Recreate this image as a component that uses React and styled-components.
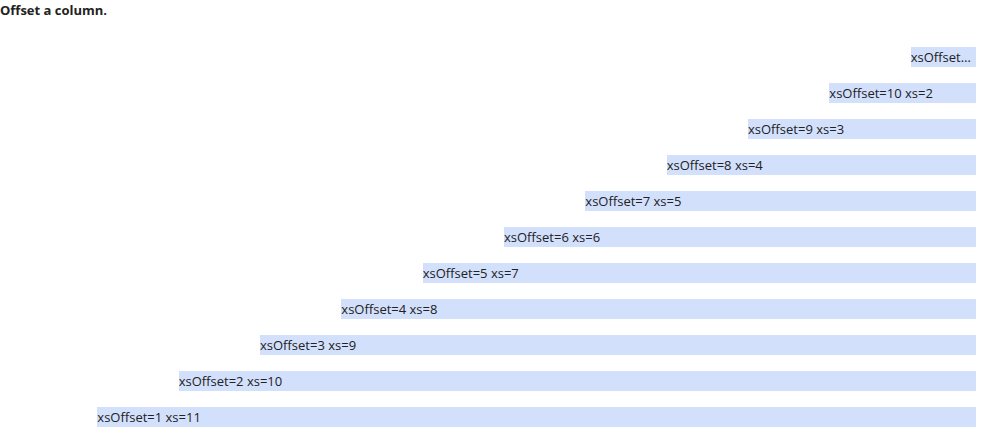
import React from 'react';
import styled, { createGlobalStyle } from 'styled-components';

const GlobalStyle = createGlobalStyle`
    body {
        margin: 0;
        font-family: "Open Sans", "Noto Sans", sans-serif;
        color: #222;
        background: #fff;
    }
`;

const Title = styled.h4`
    margin: 0;
    font-size: 13px;
    font-weight: 700;
    line-height: 20px;
`;

// 12칸 그리드, 왼쪽에 16px 여백
const Grid = styled.div`
    display: grid;
    grid-template-columns: repeat(12, 1fr);
    row-gap: 16px;
    margin: 27px 0 0 16px;
`;

const Cell = styled.div`
    grid-column: ${props => props.offset + 1} / span ${props => props.span};
    padding-right: 16px;
    min-width: 0;
`;

const Bar = styled.div`
    height: 20px;
    line-height: 20px;
    font-size: 13px;
    background-color: #d3e0fc;
    white-space: nowrap;
    overflow: hidden;
    text-overflow: ellipsis;
`;

const rows = [11, 10, 9, 8, 7, 6, 5, 4, 3, 2, 1];

const App = () => (
    <>
        <GlobalStyle/>
        <Title>Offset a column.</Title>
        <Grid>
            {rows.map(offset => (
                <Cell key={offset} offset={offset} span={12 - offset}>
                    <Bar>xsOffset={offset} xs={12 - offset}</Bar>
                </Cell>
            ))}
        </Grid>
    </>
);

export default App;
